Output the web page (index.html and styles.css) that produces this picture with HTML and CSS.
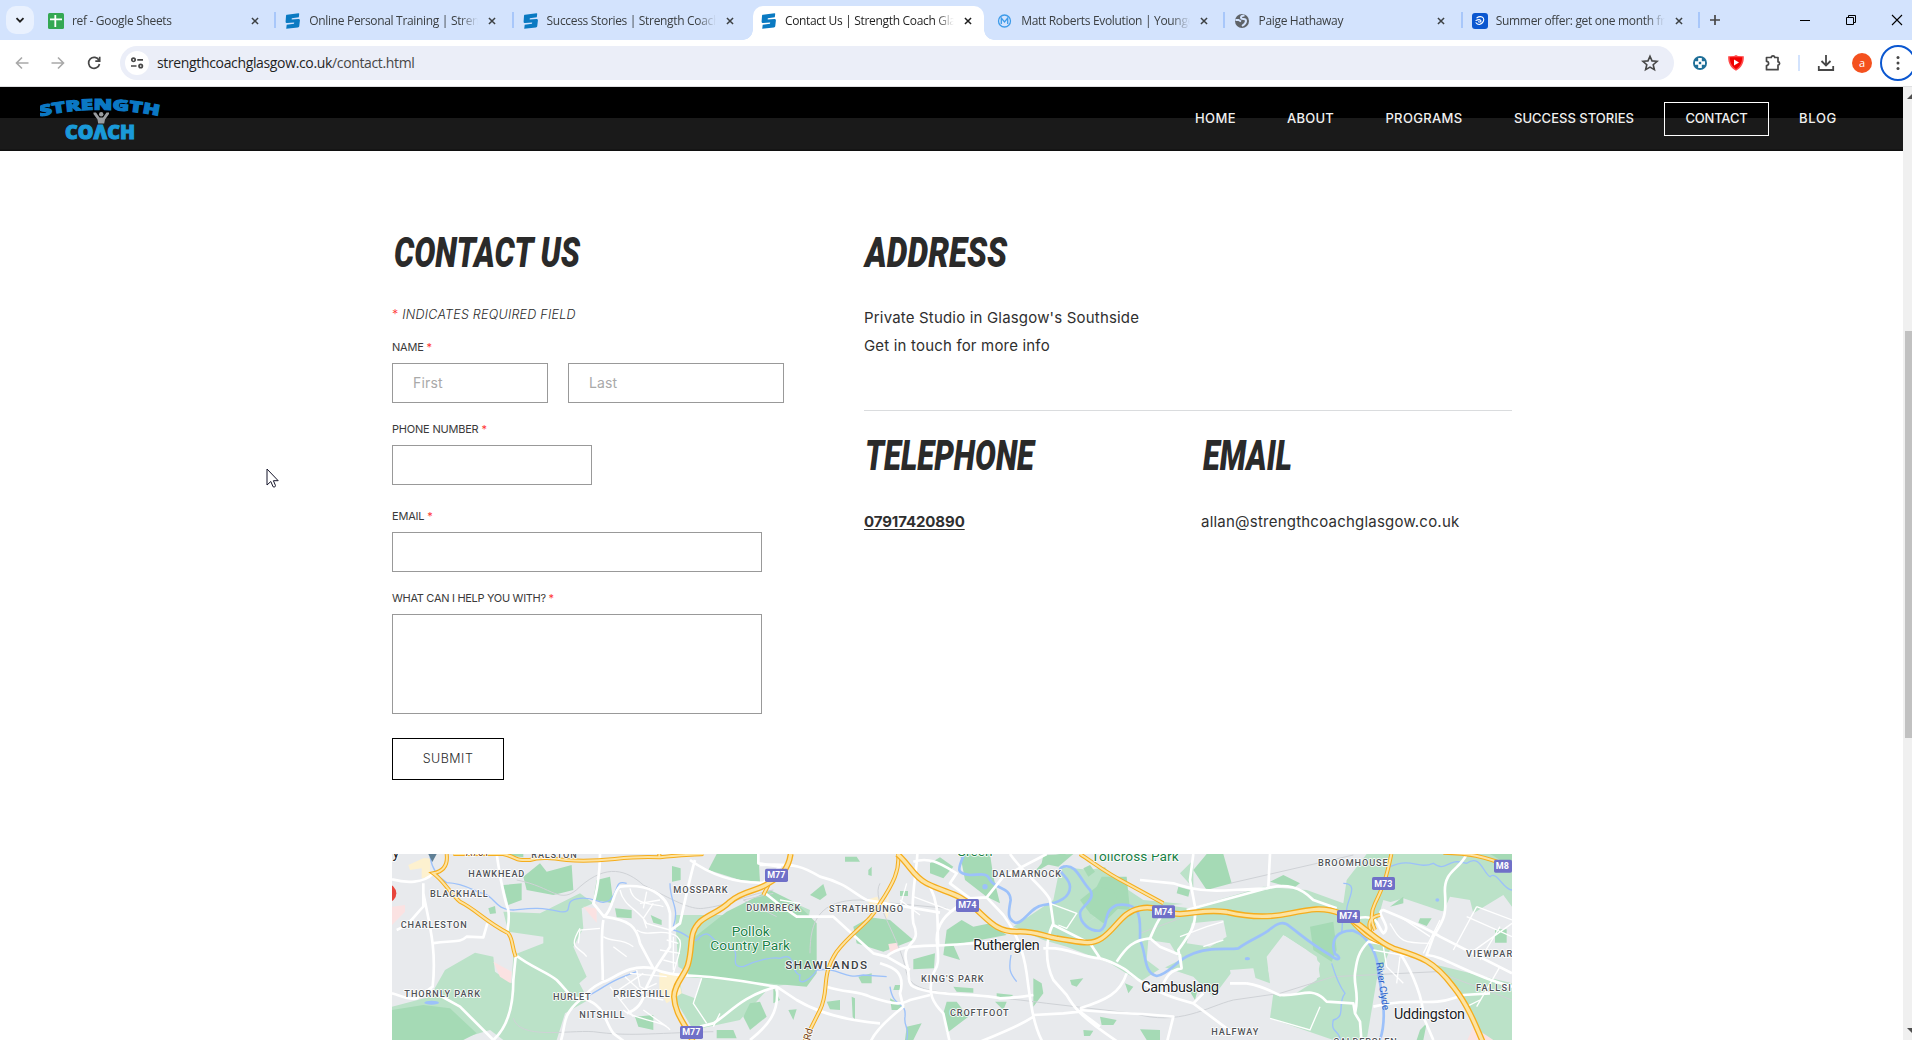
FILE: index.html
```
<!DOCTYPE html>
<html lang="en">
<head>
<meta charset="utf-8">
<title>Contact Us | Strength Coach Glasgow</title>
<link rel="stylesheet" href="styles.css">
</head>
<body>
<svg class="defs" width="0" height="0">
  <defs>
    <symbol id="x" viewBox="0 0 16 16"><path d="M4.5 4.5l7 7M11.5 4.5l-7 7" stroke="currentColor" stroke-width="1.7" fill="none"/></symbol>
    <symbol id="s-logo" viewBox="0 0 16 16"><path d="M2 1.700L13.500.3c.6 0 .8.300.7.800l-.4 3.200-7 .9-.1 1.300 6.800-.4c1 0 1.400.5 1.400 1.500l-.6 5.200c-.1 1-.6 1.500-1.500 1.600L1.200 15.700l.5-4 7.300-.9.200-1.300-7 .5C1.100 10 .5 9.500.6 8.400L1 3c.1-.9.300-1.200 1-1.300z" fill="#0a7ac2"/></symbol>
  </defs>
</svg>

<div class="tabstrip">
  <button class="tab-search"><svg width="12" height="12" viewBox="0 0 12 12"><path d="M2.500 4.200L6 7.700l3.500-3.500" fill="none" stroke="#1f1f1f" stroke-width="1.800"/></svg></button>
  <div class="tab">
    <svg class="fav" viewBox="0 0 16 16"><rect width="16" height="16" rx="1.500" fill="#34a853"/><path d="M7.300 2v12M2 6.300h12" stroke="#fff" stroke-width="1.800"/></svg>
    <span class="title">ref - Google Sheets</span><svg class="close"><use href="#x"/></svg>
  </div>
  <div class="tab sep">
    <svg class="fav"><use href="#s-logo"/></svg>
    <span class="title">Online Personal Training | Strength Coach</span><svg class="close"><use href="#x"/></svg>
  </div>
  <div class="tab sep">
    <svg class="fav"><use href="#s-logo"/></svg>
    <span class="title">Success Stories | Strength Coach Glasgow</span><svg class="close"><use href="#x"/></svg>
  </div>
  <div class="tab active">
    <svg class="fav"><use href="#s-logo"/></svg>
    <span class="title">Contact Us | Strength Coach Glasgow</span><svg class="close"><use href="#x"/></svg>
  </div>
  <div class="tab">
    <svg class="fav" viewBox="0 0 16 16"><g fill="none" stroke="#3d9be9" stroke-width="1.300"><circle cx="7.500" cy="8" r="6"/><path d="M4.300 11V5l3.200 4 3.200-4v6"/></g></svg>
    <span class="title">Matt Roberts Evolution | Younger for longer</span><svg class="close"><use href="#x"/></svg>
  </div>
  <div class="tab sep">
    <svg class="fav" viewBox="0 0 16 16"><circle cx="8" cy="8" r="7" fill="#5f6368"/><path d="M10.500 2.500c-2 0-3.500.5-3.500 2S8.500 6 9.500 6 12 6.500 12 8s-1.500 3.500-4 5M1.500 7h3L7 8.500" fill="none" stroke="#d3e3fd" stroke-width="2"/></svg>
    <span class="title">Paige Hathaway</span><svg class="close"><use href="#x"/></svg>
  </div>
  <div class="tab sep">
    <svg class="fav" viewBox="0 0 16 16"><rect width="16" height="16" rx="3" fill="#0b57d0"/><g fill="none" stroke="#fff" stroke-width="1.100" stroke-linecap="round"><path d="M5 4.800c2-1.600 5-1.500 6.300.2 1.300 2-.3 5.500-3.800 6.500M4 7.500c2-1 4-1 4.800 0s-.8 2-2.300 1.300M4 9.800c.8 1.200 2 1.800 3.500 1.700"/></g></svg>
    <span class="title">Summer offer: get one month free</span><svg class="close"><use href="#x"/></svg>
  </div>
  <button class="newtab"><svg width="14" height="14" viewBox="0 0 14 14"><path d="M7 2v10M2 7h10" stroke="#474747" stroke-width="1.700"/></svg></button>
  <div class="window-controls">
    <svg width="12" height="12" viewBox="0 0 12 12"><path d="M1 6.500h10" stroke="#000"/></svg>
    <svg width="12" height="12" viewBox="0 0 12 12"><path d="M1.500 3.500h7v7h-7zM3.500 3.500v-2h7v7h-2" fill="none" stroke="#000"/></svg>
    <svg width="12" height="12" viewBox="0 0 12 12"><path d="M1 1l10 10M11 1L1 11" stroke="#000" stroke-width="1.100"/></svg>
  </div>
</div>

<div class="toolbar">
  <div class="nav-icons">
    <svg width="14" height="14" viewBox="0 0 14 14"><path d="M13.500 7H2M7 1.500L1.500 7 7 12.500" fill="none" stroke="#a9a9a9" stroke-width="1.600"/></svg>
    <svg width="14" height="14" viewBox="0 0 14 14"><path d="M.5 7H12M7 1.500L12.500 7 7 12.500" fill="none" stroke="#a9a9a9" stroke-width="1.600"/></svg>
    <svg width="14" height="14" viewBox="0 0 14 14"><path d="M12 4.300A5.500 5.500 0 1 0 12.500 8M12.700.8v4.400H8.300" fill="none" stroke="#474747" stroke-width="1.700"/></svg>
  </div>
  <div class="omnibox">
    <span class="site-info"><svg width="14" height="14" viewBox="0 0 14 14"><g fill="none" stroke="#474747" stroke-width="1.700"><circle cx="3.500" cy="3.800" r="1.700"/><path d="M7.300 3.800H13M1 10h5.500"/><circle cx="10.700" cy="10" r="1.700"/></g></svg></span>
    <span class="url"><b>strengthcoachglasgow.co.uk</b>/contact.html</span>
    <svg class="star" width="18" height="18" viewBox="0 0 18 18"><path d="M9 2.200l2 4.700 5.100.4-3.900 3.400 1.200 5L9 13.100l-4.400 2.600 1.200-5-3.900-3.400L7 6.900z" fill="none" stroke="#474747" stroke-width="1.600"/></svg>
  </div>
  <div class="ext">
    <svg width="16" height="16" viewBox="0 0 16 16"><circle cx="8" cy="8" r="7" fill="#1f6f98"/><path d="M6.200 3h3.600v3.200H13v3.600H9.800V13H6.200V9.800H3V6.200h3.200z" fill="#fff"/><rect x="6.800" y="6.800" width="2.400" height="2.400" fill="#1f6f98"/></svg>
    <svg width="16" height="16" viewBox="0 0 16 16"><path d="M8 0l2 .9 5.800.3c.4 6-1.800 11.500-7.800 14.600C2 12.700-.2 7.200.2 1.200L6 .9z" fill="#ff4a4a"/><path d="M1.800 2.300h12.400c0 5-2 9.200-6.200 11.700C3.800 11.500 1.800 7.300 1.800 2.300z" fill="#f00000"/><path d="M6 4.400v6l5-3z" fill="#fff"/></svg>
    <svg width="18" height="18" viewBox="0 0 18 18"><path d="M2.500 3.500h4.800a1.700 1.700 0 0 1 3.400 0h3.300v4.300a1.600 1.600 0 0 1 0 3.200v4.700H2.500v-4.200a2 2 0 0 0 0-4.200z" fill="none" stroke="#474747" stroke-width="1.700" stroke-linejoin="round"/></svg>
    <i class="bar"></i>
    <svg width="18" height="18" viewBox="0 0 18 18"><path d="M9 1v10M4.500 7L9 11.500 13.500 7M1.800 12v4h14.400v-4" fill="none" stroke="#474747" stroke-width="1.800"/></svg>
    <span class="avatar">a</span>
    <span class="menu"><svg width="4" height="16" viewBox="0 0 4 16" fill="#474747"><circle cx="2" cy="2.500" r="1.500"/><circle cx="2" cy="8" r="1.500"/><circle cx="2" cy="13.500" r="1.500"/></svg></span>
  </div>
</div>

<div class="viewport">
  <div class="page">
    <header>
      <svg class="logo" width="124" height="54" viewBox="0 0 124 54">
        <path id="arch" d="M0 23.500Q60 10 121 23.500" fill="none"/>
        <text class="l1"><textPath href="#arch" textLength="120" lengthAdjust="spacingAndGlyphs">STRENGTH</textPath></text>
        <path d="M53.500 19.500h2.500l3.500 5h3.500l3.500-5H69v1.500l-4 5.500-.800 4h-6l-.700-4-4-5.500z" fill="#9a9da0"/><circle cx="61.200" cy="21.300" r="2.200" fill="#9a9da0"/>
        <text class="l2" x="25" y="46" textLength="70" lengthAdjust="spacingAndGlyphs">COΛCH</text>
      </svg>
      <nav>
        <a class="w-home">HOME</a><a class="w-about">ABOUT</a><a class="w-prog">PROGRAMS</a><a class="w-succ">SUCCESS STORIES</a><a class="w-cont current">CONTACT</a><a class="w-blog">BLOG</a>
      </nav>
    </header>

    <main>
      <form>
        <h2><svg width="200" height="54"><text x="2" y="41.500" textLength="186" lengthAdjust="spacingAndGlyphs">CONTACT US</text></svg></h2>
        <p class="req"><i>*</i> INDICATES REQUIRED FIELD</p>
        <label>NAME <i>*</i></label>
        <div class="row"><input class="first" placeholder="First"><input class="last" placeholder="Last"></div>
        <label class="l-phone">PHONE NUMBER <i>*</i></label>
        <input class="phone">
        <label class="l-email">EMAIL <i>*</i></label>
        <input class="email">
        <label class="l-help">WHAT CAN I HELP YOU WITH? <i>*</i></label>
        <textarea></textarea>
        <button class="submit" type="button">SUBMIT</button>
      </form>
      <section class="info">
        <h2><svg width="200" height="54"><text x="1" y="41.500" textLength="142" lengthAdjust="spacingAndGlyphs">ADDRESS</text></svg></h2>
        <p class="addr"><span>Private Studio in Glasgow's Southside</span><br><span class="p2">Get in touch for more info</span></p>
        <hr>
        <div class="cols">
          <div>
            <h2><svg width="200" height="54"><text x="1" y="41.500" textLength="169" lengthAdjust="spacingAndGlyphs">TELEPHONE</text></svg></h2>
            <p><a class="tel">07917420890</a></p>
          </div>
          <div>
            <h2><svg width="200" height="54"><text x="2" y="41.500" textLength="89" lengthAdjust="spacingAndGlyphs">EMAIL</text></svg></h2>
            <p class="mail">allan@strengthcoachglasgow.co.uk</p>
          </div>
        </div>
      </section>
    </main>

    <svg class="map" width="1120" height="186" viewBox="36 42 3360 558">
      <defs>
        <g id="motor">
          <path d="M940 610C925 560 885 530 882 470C882 430 920 400 925 370C940 310 925 280 960 245C990 220 1020 215 1050 185C1090 150 1130 155 1165 130C1200 110 1225 90 1232 42"/>
          <path d="M1552 42C1590 75 1600 110 1640 130C1700 160 1740 160 1785 205C1830 245 1850 275 1910 275C1960 272 1980 285 2030 295C2100 305 2130 318 2165 295C2210 265 2225 215 2280 205C2330 195 2350 222 2400 222C2460 218 2480 208 2540 216C2600 230 2660 236 2730 220C2790 208 2830 200 2880 220C2950 250 2980 300 3040 325C3120 350 3160 360 3220 440C3260 490 3285 550 3310 610"/>
        </g>
        <g id="aroad">
          <path d="M200 42C205 80 185 95 160 100C190 120 210 160 240 185C290 210 310 240 385 280C400 300 395 320 407 350"/>
          <path d="M220 42H370C420 55 400 62 450 60C480 50 520 55 560 60C680 70 720 45 840 52C890 45 930 45 970 42M838 42V52"/>
          <path d="M1554 42C1560 90 1540 130 1500 190C1470 250 1420 270 1370 335C1320 410 1350 450 1320 510L1270 610"/>
          <path d="M2100 42C2150 75 2180 100 2240 130L2350 190"/>
          <path d="M3034 42C3020 110 3010 140 2985 190C2970 220 2975 250 2985 270"/>
          <path d="M3190 38C3260 40 3310 45 3400 85"/>
          <path d="M2915 245C2945 275 2960 295 3010 310M3000 225C2970 230 2960 250 2975 285M1150 165L1165 135"/>
        </g>
      </defs>
      <rect x="36" y="42" width="3360" height="558" fill="#e8eaed"/>

      <g fill="#bbe2c8">
        <path d="M36 500L150 470L195 390L285 338L340 350L345 395L395 430L400 345L490 310V290L385 275L370 215L480 220L600 160L640 190L605 205L610 265L580 320L620 410L598 430L625 480L555 520L530 600H370L330 570L230 600H36z"/>
        <path d="M885 225L1110 225L1200 170L1290 210L1250 430L1170 440L1080 540L940 570L880 470L925 400L895 380z"/>
        <path d="M1900 260L2020 180L2040 80L2130 90L2280 60L2440 42V190L2180 210L2100 260L2230 180L2310 190L2430 205L2650 140L2780 150L2890 190L2900 120L2960 42H3396V240L3080 200L3010 180L2990 250L2960 290L3030 330L2990 420L2960 600H2860L2670 535L2680 460L2700 470L2820 410L2810 350L2710 285L2660 350L2670 430L2560 390L2500 470L2440 410L2350 380L2280 425L2190 370L2060 320L1990 300z"/>
        <path d="M3170 375L3396 430V600H3300L3240 450z"/>
      </g>
      <g fill="#e8eaed">
        <path d="M2150 42H2440V60L2400 100L2445 150L2560 150L2440 195L2290 180L2200 120z"/>
        <path d="M2305 300L2370 310L2400 360L2340 390L2300 360z"/><path d="M2435 250L2530 240L2540 290L2490 320L2420 310z"/>
        <path d="M2715 288L2780 330L2820 370L2810 420L2740 465L2680 460L2665 390z"/>
        <path d="M2550 390L2620 385L2630 430L2560 440z"/><path d="M3020 190L3070 175L3190 215L3210 170L3270 180L3280 220L3370 165L3396 200V400L3230 370L3110 340L3010 290L3025 240z"/>
        <path d="M3030 340L3120 350L3200 430L3290 600H3030L3050 480z"/><path d="M900 410L965 415L945 475L905 460z"/>
      </g>
      <g fill="#a5dab5">
        <path d="M925 400L945 290L1040 215L1170 150L1250 190L1310 250V400L1280 440L1190 432L925 410z"/>
        <path d="M1010 42H1135L1140 125L1080 120L985 90z"/><path d="M430 110L480 70L500 95L575 75L580 150L520 165L440 150z"/><path d="M370 135L425 130V180L385 195z"/>
        <path d="M640 180L700 190L690 110L650 120zM876 78L902 85V120L876 125zM705 205L755 210V235L710 232z"/><path d="M812 225L845 240V255L820 248zM325 205L345 198L348 220L330 222z"/>
        <path d="M36 510L130 495L210 505L290 580L250 600H36zM765 530L820 525V570L775 560z"/><path d="M1110 490L1140 485L1160 530L1110 570L1090 530z"/><path d="M1010 570L1060 570L1070 595H1010z"/>
        <path d="M350 42H430V52zM1180 440L1200 480L1180 490z"/>
        <path d="M1420 260L1470 232L1530 240L1600 300L1510 335L1430 310z"/><path d="M1650 70L1680 52L1720 80L1690 115L1650 100z"/><path d="M1290 165L1330 132L1340 165L1320 180z"/>
        <path d="M1700 270L1745 240L1780 260L1830 250L1880 285L1720 315L1740 360L1690 345z"/><path d="M1600 358L1665 340L1662 385L1600 388z"/>
        <path d="M1740 42H1830L1840 110L1860 190L1820 170L1755 120zM2040 42H2060L1960 100L2000 52z"/><path d="M1700 485H1730L1765 530L1700 580L1690 520zM1960 415L1985 430L1990 460L1960 500z"/>
        <path d="M1990 45L2080 42L2035 80L1985 70zM1560 153H1584V168H1560zM1465 90L1475 80V108L1465 105zM1395 50H1430L1440 65H1395z"/>
        <path d="M2110 85L2130 75L2145 95L2125 110zM2165 110H2240L2250 210L2190 205L2145 150z"/>
        <path d="M2100 180L2150 140L2200 150L2220 200L2170 250L2130 220z"/>
        <path d="M2440 90L2480 42H2530L2555 130L2480 150zM2670 125L2710 105L2760 130L2740 145zM2790 260L2860 245L2870 330L2855 365L2800 330z"/>
        <path d="M3070 190V170L3030 200zM3120 235L3155 235L3140 258L3115 248zM3345 268H3380V308H3345zM3330 42H3396V80z"/>
        <path d="M2395 140L2430 150L2425 170L2390 160zM2415 430L2455 440L2445 480zM2070 420L2110 415L2090 440L2075 435zM2235 430L2260 440L2245 460zM2160 530L2210 540L2200 555L2165 555zM3120 570L3140 550L3130 600H3110zM2280 568L2340 570V600H2300z"/>
        <path d="M1530 475L1575 500L1560 510H1535zM1415 470L1425 475V540L1418 530zM1340 485L1380 480V510L1350 508zM1225 510L1250 508L1240 540zM1435 410L1475 400V430L1445 430zM1580 560L1625 550L1600 600H1575z"/>
        <path d="M1720 440L1780 445V458L1730 455zM1850 460L1900 465L1890 472H1850zM1545 435H1560V450H1540zM1845 485H1880L1870 510zM2110 570L2140 572L2130 588H2112z"/>
      </g>
      <g fill="#fbe2e2"><path d="M36 200L75 195V215L36 255z"/><path d="M340 365L395 395L392 430L360 410z"/><path d="M610 200L650 205V248L630 225z"/><path d="M1525 312L1552 308L1555 332L1530 335z"/><path d="M3280 560L3340 600H3262z"/></g>
      <g fill="#fdf1cf"><path d="M85 75L130 55H150V110L125 115V85L90 90z"/><path d="M838 398L895 405L905 460L860 490L838 450z"/><path d="M1460 180L1490 170L1530 200L1520 240L1510 195L1470 195z"/><path d="M1520 130L1528 200L1520 240z"/></g>

      <g fill="none" stroke="#cfd2d6" stroke-width="3">
        <path d="M410 120C520 140 540 200 600 140C680 70 740 90 790 135C880 180 930 210 970 205C1050 195 1080 170 1180 150"/>
        <path d="M400 535C420 600 560 570 640 575C750 590 800 580 1000 575"/>
        <path d="M1290 340C1290 240 1320 180 1440 180L1700 205M1500 130C1470 180 1560 290 1580 400C1600 470 1700 450 2000 490L2260 520C2400 560 2480 500 2560 480L2700 460L2860 410L3170 395L3396 480"/>
        <path d="M2280 280L2400 235M2550 130L2920 45M1190 230L1090 180L1180 160"/>
      </g>

      <g fill="none" stroke="#9cc1fa" stroke-width="4">
        <path d="M150 50C155 80 170 110 200 128C260 130 290 160 310 160C345 170 345 210 400 210C450 205 480 200 540 215C590 220 540 180 600 175C650 170 660 200 690 180C720 150 700 120 740 130M870 130C870 190 900 200 880 260"/>
        <path d="M880 270C930 280 940 320 960 290C1000 260 990 320 1050 320C1090 340 1040 380 1090 380C1130 360 1180 350 1200 355C1250 330 1230 400 1260 405C1250 450 1300 410 1310 390C1380 380 1390 420 1450 405L1520 410M630 465C690 430 700 420 770 395"/>
        <path d="M1530 440C1540 510 1580 480 1575 530C1570 560 1590 560 1580 600M1893 345C1885 390 1890 400 1910 425M2855 370C2870 420 2880 440 2895 460C2870 490 2900 530 2860 540C2850 580 2880 570 2880 600"/>
        <path d="M2890 130C2940 130 2900 180 2900 210C2880 230 2890 260 2885 275M3030 80C3100 50 3110 90 3160 70C3200 100 3200 50 3260 70C3300 40 3310 100 3330 110C3350 90 3370 150 3396 150"/>
      </g>
      <g fill="none" stroke="#9cc1fa" stroke-width="8" stroke-linejoin="round">
        <path d="M1752 42C1740 80 1720 100 1770 105C1800 105 1820 95 1830 120C1850 150 1890 140 1892 180C1886 215 1880 235 1905 248C1930 255 1950 200 1990 195C2040 190 2070 170 2070 140C2070 110 2020 90 2050 80C2090 70 2100 120 2130 150C2150 180 2100 200 2100 220C2100 250 2130 275 2160 272C2190 255 2165 215 2210 195C2290 185 2280 240 2280 300C2300 340 2290 400 2330 408C2370 400 2390 360 2430 345C2480 320 2540 330 2575 325C2610 300 2640 290 2665 272C2690 250 2710 240 2730 260C2770 290 2790 310 2850 345C2880 370 2885 350 2865 342C2850 300 2870 270 2920 272C2970 290 2995 350 2995 400C3010 480 3020 540 3000 600"/>
      </g>
      <g fill="#9cc1fa"><circle cx="1815" cy="140" r="8"/><ellipse cx="155" cy="488" rx="22" ry="6"/><ellipse cx="2602" cy="356" rx="8" ry="5"/><ellipse cx="3172" cy="180" rx="6" ry="5"/></g>

      <g fill="none" stroke="#fff" stroke-width="4">
        <path d="M770 270C800 290 830 270 870 280C920 290 900 330 880 400M720 150C730 200 780 210 800 250L870 270M750 145C760 200 830 190 850 200M820 190L790 235L800 265M735 410L800 470L850 480M700 460L790 400M720 480L830 430M790 510L860 560M730 510C760 540 850 540 870 570M840 330L900 340M850 360L890 370M860 300L895 310M600 265C560 330 600 320 620 350M670 290C700 310 720 290 760 320M700 320L740 350"/>
        <path d="M800 155L790 205M840 180L780 190M880 290V390M770 390L780 440L840 470M750 400L860 410M660 265L600 270L595 310M690 440L760 530"/>
        <path d="M1600 170L1720 215M1560 180L1620 225M1580 130L1560 200M1200 180L1260 190M2010 190L2090 220L2060 265L2035 255M2400 290L2480 260L2530 245M2470 320L2530 300M3030 250C3060 300 3060 310 3150 310M3060 230L3150 290M3220 330L3290 200M3270 340L3396 250M3290 200L3396 240M3260 230L3396 290M3300 360L3360 260M3180 240L3130 340M3010 320L3020 380L3070 430M3060 350L3050 430M2980 330L3090 350M3300 480L3260 500M3360 380L3290 500M965 415L940 490L980 550M2670 535L2790 570L2820 500M1000 560L1020 520"/>
      </g>
      <g fill="none" stroke="#fff" stroke-width="8" stroke-linejoin="round">
        <path d="M36 118C80 130 130 130 160 100M130 130V200C100 230 90 255 50 270M130 160C150 260 170 330 158 440L110 475C80 480 60 465 36 460M155 310C220 300 240 310 260 290L310 292L322 250"/>
        <path d="M350 42C360 110 370 170 385 210C390 250 380 270 382 285M407 350L400 420C400 490 385 560 340 600L240 500L150 450M407 345C450 380 500 395 530 420C570 460 570 480 610 475C680 500 670 540 700 580L740 610M600 480C540 530 560 560 540 610"/>
        <path d="M660 42C660 100 650 160 640 190L672 230C700 210 700 150 720 140C800 130 860 160 870 220V320L830 380L795 450C790 490 770 510 740 520M672 230C750 240 770 260 780 310L820 385C740 370 700 420 670 425C640 440 620 455 610 475M670 240C660 300 670 380 668 420M870 272L900 250C920 160 930 110 945 60M820 385C850 400 880 405 950 408C1060 415 1120 430 1190 440L1250 480C1300 510 1380 540 1500 550M1190 440C1200 520 1160 560 1110 600M1190 440C1080 470 1050 520 1000 550L960 560M930 60C1000 110 1080 130 1150 128L1200 80L1135 70V42M1150 155L1200 195L1250 230H1360L1480 340L1520 350C1560 310 1640 320 1700 315C1800 310 1860 300 1920 312"/>
        <path d="M1140 75C1250 70 1270 80 1320 110C1400 130 1420 160 1460 180L1680 218M1612 42C1610 100 1590 180 1600 250C1630 320 1560 300 1580 370C1590 400 1580 430 1600 440C1660 470 1800 460 1860 475C1900 475 1930 470 1960 465"/>
        <path d="M1600 65C1650 50 1680 70 1730 100L1710 130L1770 175L1820 172L1870 225C1910 280 1930 330 1940 400C1950 480 1960 560 1990 610M1740 195C1700 220 1670 250 1670 300C1680 380 1670 380 1660 400C1640 460 1660 490 1690 520L1710 610M1650 140C1680 200 1670 240 1675 320M1820 172L1870 110L2000 42M1890 42C1930 100 2000 150 2010 180L2020 250C2000 290 1990 360 2020 420L2060 465C2080 500 2100 530 2220 610M2020 255L2130 310L2160 355C2180 360 2230 380 2250 400C2320 460 2400 480 2440 490L2560 580M1990 325C2060 320 2100 350 2160 355M2210 365C2240 320 2260 300 2310 295C2330 250 2340 220 2380 200M2310 295L2340 320L2400 345L2405 385C2370 390 2360 410 2345 440M2405 385L2395 330C2430 280 2450 260 2445 200L2430 120L2440 42M2280 120L2380 130C2440 150 2480 155 2560 150L2660 145L2420 210M2660 145C2720 130 2760 140 2800 180L2870 205M2670 42L2665 140M2100 505C2180 480 2220 460 2240 400M2100 510C2200 520 2300 520 2380 530L2360 610M1960 525L2050 520L2100 515L2160 560M1960 530C1900 570 1830 590 1790 610"/>
        <path d="M1500 370C1530 380 1580 390 1560 460L1570 500C1520 540 1480 580 1470 610M1340 440C1400 460 1430 450 1470 470C1560 500 1570 490 1590 480L1650 465M1520 350L1590 390M2600 430C2660 440 2680 460 2700 465C2760 470 2790 440 2830 475L2840 485L2920 490L2925 520M2550 430H2600M2440 490L2470 460M3000 310L2965 305C2930 340 2930 370 2925 400C2920 440 2940 460 2925 520L2940 545L2945 610M2930 235C3000 220 2990 260 3010 280C3040 260 2980 215 3010 210C3060 230 3150 270 3180 290L3396 400M3260 42C3240 90 3190 90 3195 160C3200 230 3190 240 3160 290L3140 345C3200 350 3250 400 3396 440M3060 340C3100 400 3130 480 3130 530L3160 600M2980 500C3100 470 3150 500 3220 475L3250 465L3330 460"/>
      </g>

      <g fill="none" stroke="#f5ad1d" stroke-width="12"><use href="#aroad"/></g>
      <g fill="none" stroke="#fde3a1" stroke-width="6"><use href="#aroad"/></g>
      <g fill="none" stroke="#f5ad1d" stroke-width="18"><use href="#motor"/></g>
      <g fill="none" stroke="#fde3a1" stroke-width="10"><use href="#motor"/></g>

      <path d="M145 42H170L157 66z" fill="#5f7f95"/>
      <circle cx="22" cy="160" r="27" fill="#e8453c"/>

      <g class="hood">
        <text x="454" y="55" textLength="136">RALSTON</text><text x="265" y="111" textLength="168">HAWKHEAD</text><text x="150" y="171" textLength="173">BLACKHALL</text>
        <text x="62" y="264" textLength="198">CHARLESTON</text><text x="73" y="471" textLength="227">THORNLY PARK</text><text x="519" y="480" textLength="113">HURLET</text>
        <text x="598" y="534" textLength="135">NITSHILL</text><text x="700" y="471" textLength="169">PRIESTHILL</text><text x="880" y="159" textLength="163">MOSSPARK</text>
        <text x="1099" y="213" textLength="162">DUMBRECK</text><text x="1347" y="216" textLength="222">STRATHBUNGO</text><text x="1837" y="111" textLength="206">DALMARNOCK</text>
        <text x="1623" y="426" textLength="188">KING'S PARK</text><text x="1710" y="528" textLength="176">CROFTFOOT</text><text x="2814" y="78" textLength="209">BROOMHOUSE</text>
        <text x="3258" y="351" textLength="160">VIEWPARK</text><text x="3288" y="453" textLength="146">FALLSIDE</text><text x="2494" y="585" textLength="141">HALFWAY</text>
        <text x="2860" y="615" textLength="190">CALDERGLEN</text>
      </g>
      <text class="big" x="1216" y="387" textLength="245">SHAWLANDS</text>
      <g class="town">
        <text x="-8" y="54" textLength="66">ley</text><text x="1780" y="331" textLength="199">Rutherglen</text><text x="2284" y="457" textLength="233">Cambuslang</text><text x="3042" y="538" textLength="213">Uddingston</text>
      </g>
      <g class="park">
        <text x="1055" y="288" textLength="114">Pollok</text><text x="991" y="331" textLength="239">Country Park</text><text x="1730" y="49" textLength="108">Green</text><text x="2134" y="63" textLength="262">Tollcross Park</text>
      </g>
      <text class="river" transform="translate(2988 368) rotate(82)" textLength="145">River Clyde</text>
      <text class="rd" x="257" y="49" textLength="70">A761</text>
      <text class="rd" transform="translate(1290 602) rotate(-75)">Rd</text>

      <g fill="#7070c8">
        <rect x="1155" y="86" width="69" height="40" rx="5"/><rect x="900" y="558" width="69" height="39" rx="5"/><rect x="1728" y="177" width="69" height="39" rx="5"/>
        <rect x="2316" y="196" width="69" height="39" rx="5"/><rect x="2871" y="210" width="69" height="39" rx="5"/><rect x="2976" y="111" width="69" height="39" rx="5"/><rect x="3342" y="59" width="54" height="39" rx="5"/>
      </g>
      <g class="shield">
        <text x="1189" y="115">M77</text><text x="934" y="586">M77</text><text x="1762" y="205">M74</text><text x="2350" y="225">M74</text><text x="2905" y="238">M74</text><text x="3010" y="141">M73</text><text x="3367" y="88">M8</text>
      </g>
    </svg>
  </div>
  <div class="scrollbar"><i class="up"></i><i class="thumb"></i><i class="down"></i></div>
</div>

<svg class="cursor" width="14" height="21" viewBox="0 0 14 21"><path d="M1 1v16l3.800-3.500 2.300 5.300c1.500.6 2.800-.2 2.300-1.500L7.400 12.700h4.800z" fill="#fff" stroke="#15152a" stroke-width="1"/></svg>
</body>
</html>
```
FILE: styles.css
```
* { box-sizing: border-box; }
body { margin: 0; width: 1912px; height: 1040px; overflow: hidden; background: #fff; font-family: "Open Sans", sans-serif; }
button { border: 0; padding: 0; background: none; font: inherit; }
i { font-style: normal; }
.defs { display: block; position: absolute; }

/* Browser tabs */
.tabstrip { display: flex; height: 40px; background: #d3e3fd; padding: 6px 9px 0 6px; }
.tab-search { width: 28px; height: 28px; border-radius: 10px; background: #e9f1fe; display: grid; place-items: center; margin-right: 4px; }
.tab { position: relative; flex: none; width: 237.300px; height: 34px; padding: 0 11px 5px 10px; display: flex; align-items: center; font-size: 12px; letter-spacing: -.32px; color: #3c4043; }
.tab.sep::before { content: ""; position: absolute; left: -1px; top: 6px; width: 2px; height: 16px; background: #a8c7fa; }
.fav { width: 16px; height: 16px; margin-right: 8px; flex: none; }
.title { flex: none; width: 169px; overflow: hidden; white-space: nowrap; line-height: 18px; padding-top: 1px; -webkit-mask: linear-gradient(90deg, #000 89%, transparent); mask: linear-gradient(90deg, #000 89%, transparent); }
.close { width: 14px; height: 14px; margin-left: 7px; flex: none; }
.tab.active { background: #fff; border-radius: 10px 10px 0 0; color: #1f1f1f; left: 3px; width: 231px; margin-right: 6.300px; padding-left: 8px; }
.tab.active::before, .tab.active::after { content: ""; position: absolute; bottom: 0; width: 10px; height: 10px; }
.tab.active::before { left: -10px; background: radial-gradient(circle at 0 0, transparent 9.500px, #fff 10px); }
.tab.active::after { right: -10px; background: radial-gradient(circle at 100% 0, transparent 9.500px, #fff 10px); }
.newtab { width: 28px; height: 28px; display: grid; place-items: center; margin-left: 2px; position: relative; }
.newtab::before { content: ""; position: absolute; left: -3px; top: 6px; width: 2px; height: 16px; background: #a8c7fa; }
.window-controls { margin-left: auto; display: flex; gap: 34px; padding-top: 8px; }

/* Toolbar */
.toolbar { display: flex; height: 47px; border-bottom: 1px solid #dedfe1; align-items: center; background: #fff; padding-bottom: 1px; overflow: hidden; }
.nav-icons { flex: none; display: flex; gap: 22px; padding-left: 15px; width: 120px; }
.omnibox { flex: none; width: 1554px; height: 34px; border-radius: 17px; background: #ebeef8; display: flex; align-items: center; padding: 0 15px 0 5px; }
.site-info { width: 24px; height: 24px; border-radius: 50%; background: #fff; display: grid; place-items: center; }
.url { margin-left: 8px; font-size: 14px; letter-spacing: -.35px; color: #474747; }
.url b { font-weight: 400; color: #1f1f1f; }
.star { margin-left: auto; }
.ext { flex: none; display: flex; align-items: center; padding-left: 18px; }
.ext > :nth-child(2) { margin-left: 20px; }
.ext > :nth-child(3) { margin-left: 20px; }
.ext > .bar { width: 2px; height: 16px; background: #d3e3fd; margin-left: 16px; }
.ext > :nth-child(5) { margin-left: 17px; }
.avatar { width: 20px; height: 20px; border-radius: 50%; background: #f4511e; color: #fff; font-size: 11px; line-height: 19px; text-align: center; margin-left: 17px; }
.menu { flex: none; width: 36px; height: 36px; border: 2px solid #0b57d0; border-radius: 50%; display: grid; place-items: center; margin-left: 8px; }

/* Page */
.viewport { display: flex; height: 953px; }
.page { width: 1903px; }
header { height: 64px; display: flex; justify-content: space-between; align-items: flex-start; background: linear-gradient(#000 31px, #1a1a1a 31px, #1a1a1a 62px, #101010 63px); padding: 0 45px 0 40px; }
.logo { margin-top: 6px; }
.l1 { font: 800 15px "Open Sans", sans-serif; fill: #0b78c4; stroke: #0b78c4; stroke-width: 1px; }
.l2 { font: 800 19.500px "Open Sans", sans-serif; fill: #1a9ad9; stroke: #1a9ad9; stroke-width: 1px; }
nav { display: flex; gap: 9px; padding-top: 15px; }
nav a { height: 34px; border: 1px solid transparent; text-align: center; color: #f0f0f0; font: 500 13px/31px "Inter", sans-serif; white-space: nowrap; }
nav .current { border-color: #fff; letter-spacing: -.2px; }
.w-home { width: 83px; letter-spacing: .4px; }
.w-about { width: 89px; letter-spacing: .25px; }
.w-prog { width: 120px; letter-spacing: .35px; }
.w-succ { width: 162px; }
.w-cont { width: 105px; }
.w-blog { width: 80px; letter-spacing: .7px; }

main { display: flex; height: 703px; padding: 74px 0 0 392px; }
form { width: 472px; display: flex; flex-direction: column; align-items: flex-start; }
h2 { margin: 0; height: 54px; }
h2 svg { display: block; overflow: visible; }
h2 text { font: italic 900 42.500px "Roboto", sans-serif; fill: #2a2a2a; }
.req { margin: 26px 0 0; font: italic 300 12.500px/20px "Inter", sans-serif; letter-spacing: .25px; color: #2a2a2a; }
.req i, label i { color: #f33; }
label { font: 400 11px/16px "Inter", sans-serif; letter-spacing: -.2px; color: #3a3a3a; margin: 14px 0 8px; }
input, textarea { display: block; margin: 0; border: 1px solid #999; border-radius: 0; background: #fff; height: 40px; padding: 0 20px 2px; font: 400 14px "Inter", sans-serif; letter-spacing: .15px; outline: 0; resize: none; }
input::placeholder { color: #a9a9a9; opacity: 1; }
.row { display: flex; gap: 20px; }
.first { width: 156px; }
.last { width: 216px; }
.phone { width: 200px; }
.email { width: 370px; }
label.l-phone { margin-top: 18px; }
label.l-email { margin-top: 23px; }
label.l-help { margin-top: 18px; letter-spacing: -.3px; }
textarea { width: 370px; height: 100px; }
.submit { width: 112px; height: 42px; border: 1px solid #000; margin-top: 24px; padding-bottom: 1px; font: 300 12.500px "Inter", sans-serif; letter-spacing: .5px; color: #2a2a2a; }

.info { width: 648px; }
.info p { margin: 0; font: 400 15px/28px "Inter", sans-serif; letter-spacing: .18px; color: #2f2f2f; }
.info .addr { margin-top: 25px; }
hr { margin: 50px 0 0; border: 0; height: 1px; background: #dadcde; }
.cols { display: grid; grid-template-columns: 337px 1fr; padding-top: 17px; }
.cols p { margin-top: 26px; }
.tel { font-weight: 700; letter-spacing: -.1px; text-decoration: underline; text-underline-offset: 2px; }
.info .mail { letter-spacing: .22px; }

/* Map */
.map { display: block; margin-left: 392px; }
.map text { font-family: "Roboto", sans-serif; paint-order: stroke; stroke: #fff; stroke-width: 5px; stroke-linejoin: round; }
.hood text { font-size: 27.500px; font-weight: 500; fill: #505357; }
.map .big { font-size: 35px; font-weight: 500; fill: #3c4043; }
.town text { font-size: 43px; fill: #202124; }
.park text { font-size: 41px; fill: #188045; }
.map .river { font-size: 30px; fill: #2a62c9; stroke: none; }
.map .rd { font-size: 30px; fill: #75420f; }
.shield text { font-size: 27px; font-weight: 700; fill: #fff; stroke: none; text-anchor: middle; }

/* Page scrollbar */
.scrollbar { width: 9px; display: flex; flex-direction: column; background: #f0f0f0; overflow: hidden; }
.up { margin: 7px 0 0 4px; border: 5px solid transparent; border-top: 0; border-bottom-color: #505050; width: 10px; height: 5px; }
.thumb { margin: 232px 0 0 2px; height: 407px; background: #c1c1c1; }
.down { margin: auto 0 7px 4px; border: 5px solid transparent; border-bottom: 0; border-top-color: #505050; width: 10px; height: 5px; }

.cursor { position: absolute; left: 266px; top: 468px; }
```
